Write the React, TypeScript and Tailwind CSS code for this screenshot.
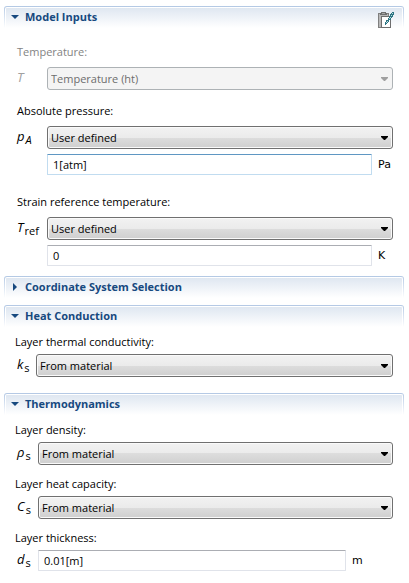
import React, { useState } from "react";
import clsx from "clsx";

interface SectionProps {
  title: string;
  defaultOpen?: boolean;
  action?: React.ReactNode;
  className?: string;
  children?: React.ReactNode;
}

interface SelectFieldProps {
  id: string;
  options: string[];
  disabled?: boolean;
}

interface TextFieldProps {
  id: string;
  value: string;
  label?: string;
  active?: boolean;
}

const ClipboardPenIcon = () => (
  <svg width="16" height="16" viewBox="0 0 16 16" shapeRendering="crispEdges">
    <path fill="#7f7f7f" d="M0 1h11v15H0z" />
    <path fill="#b9b9b9" d="M1 2h9v13H1z" />
    <path fill="#6e6e6e" d="M3 0h5v1h1v2H2V1h1z" />
    <path fill="#a5a5a5" d="M4 1h3v1H4z" />
    <path fill="#6e6e6e" d="M3 4h10v12H3z" />
    <path fill="#ffffff" d="M4 5h8v10H4z" />
    <path
      fill="#2b7482"
      d="M14 0h2v3h-1v2h-1v1h-1v2h-2v2h-1v1H9v1H8v1H7v-3h1V8h2V6h1V4h1V2h1V1h1z"
    />
    <path
      fill="#b5d8de"
      d="M14 1h1v1h-1zM13 3h1v1h-1zM12 5h1v1h-1zM11 6h1v1h-1zM9 9h1v1H9zM8 10h1v1H8z"
    />
  </svg>
);

const Section: React.FC<SectionProps> = ({
  title,
  defaultOpen = true,
  action,
  className,
  children,
}) => {
  const [open, setOpen] = useState(defaultOpen);

  return (
    <section>
      <div className="rounded-t-[3px] bg-linear-to-b from-[#b3c8e4] to-white px-px pt-px">
        <div className="flex h-[21px] items-center justify-between rounded-t-[2px] border-x border-t border-white bg-linear-to-b from-[#dfe7f1] to-white pr-2">
          <h2 className="pb-0.5">
            <button
              type="button"
              aria-expanded={open}
              onClick={() => setOpen(!open)}
              className="flex items-center gap-1.5 pl-[5px] text-[11px] leading-4 font-bold text-[#17497f]"
            >
              <svg width="8" height="8" viewBox="0 0 8 8">
                {open ? (
                  <path fill="currentColor" d="M0 2h8L4 6z" />
                ) : (
                  <path fill="currentColor" d="M2 0v8l4-4z" />
                )}
              </svg>
              {title}
            </button>
          </h2>
          {action}
        </div>
      </div>
      {open && children && (
        <div className={clsx("pr-[11px]", className)}>{children}</div>
      )}
    </section>
  );
};

const SelectField: React.FC<SelectFieldProps> = ({ id, options, disabled }) => (
  <div className="relative min-w-0 flex-1">
    <select
      id={id}
      disabled={disabled}
      className={clsx(
        "block h-[23px] w-full appearance-none rounded-[3px] border pr-5 pl-[3px] leading-4",
        disabled
          ? "border-[#adb2b5] bg-[#f4f4f4] text-[#6d6d6d] opacity-100"
          : "border-[#707070] bg-[linear-gradient(#f2f2f2,#ebebeb_50%,#dddddd_50%,#cfcfcf)] text-black shadow-[inset_0_0_0_1px_#fafafa]",
      )}
    >
      {options.map((item) => (
        <option key={item}>{item}</option>
      ))}
    </select>
    <svg
      width="7"
      height="4"
      viewBox="0 0 7 4"
      className={clsx(
        "pointer-events-none absolute top-[10px] right-[5px]",
        disabled ? "text-[#a0a0a0]" : "text-black",
      )}
    >
      <path fill="currentColor" d="M0 0h7v1L4 4H3L0 1z" />
    </svg>
  </div>
);

const TextField: React.FC<TextFieldProps> = ({ id, value, label, active }) => (
  <input
    id={id}
    type="text"
    defaultValue={value}
    aria-label={label}
    className={clsx(
      "h-[21px] min-w-0 flex-1 rounded-[1px] border bg-white pl-[5px] leading-4 outline-none",
      active
        ? "border-[#c1dcf0] border-t-[#5f97c3]"
        : "border-[#e0e3ea] border-t-[#abadb3]",
    )}
  />
);

const Unit: React.FC<{ children: string; className: string }> = ({
  children,
  className,
}) => (
  <span
    className={clsx(
      "ml-1.5 shrink-0 font-['DejaVu_Sans',sans-serif] text-[11px] leading-4",
      className,
    )}
  >
    {children}
  </span>
);

const Sym: React.FC<{
  name: string;
  sub?: string;
  italicSub?: boolean;
  className: string;
}> = ({ name, sub, italicSub, className }) => (
  <span
    className={clsx(
      "flex h-5 shrink-0 items-start gap-px text-[13px] leading-4",
      className,
    )}
  >
    <i>{name}</i>
    {sub && (
      <span
        className={clsx("pt-1 text-[11px] leading-4", italicSub && "italic")}
      >
        {sub}
      </span>
    )}
  </span>
);

const Label: React.FC<{
  htmlFor: string;
  className?: string;
  children: string;
}> = ({ htmlFor, className, children }) => (
  <label htmlFor={htmlFor} className={clsx("block leading-4", className)}>
    {children}
  </label>
);

const sourceOptions = ["From material", "User defined"];
const inputOptions = ["User defined", "Temperature (ht)"];

export default function App() {
  return (
    <main className="bg-white pt-1.5 pr-[5px] pb-3 pl-1 font-['Open_Sans',sans-serif] text-[11px] text-black">
      <Section
        title="Model Inputs"
        className="pt-4 pb-2.5 pl-[13px]"
        action={
          <button type="button" aria-label="Edit model inputs" className="pt-1">
            <ClipboardPenIcon />
          </button>
        }
      >
        <Label htmlFor="temperature" className="mb-[7px] text-[#838383]">
          Temperature:
        </Label>
        <div className="flex items-center">
          <Sym name="T" className="w-[30px] text-[#a0a0a0]" />
          <SelectField
            id="temperature"
            options={["Temperature (ht)", "User defined"]}
            disabled
          />
        </div>

        <Label htmlFor="pressure" className="mt-[13px] mb-[7px]">
          Absolute pressure:
        </Label>
        <div className="flex items-center">
          <Sym name="p" sub="A" italicSub className="w-[30px]" />
          <SelectField id="pressure" options={inputOptions} />
        </div>
        <div className="mt-[5px] flex items-center pl-[30px]">
          <TextField
            id="pressure-value"
            label="Absolute pressure value"
            value="1[atm]"
            active
          />
          <Unit className="w-[15px]">Pa</Unit>
        </div>

        <Label htmlFor="strain" className="mt-[19px] mb-[7px]">
          Strain reference temperature:
        </Label>
        <div className="flex items-center">
          <Sym name="T" sub="ref" className="w-[30px]" />
          <SelectField id="strain" options={inputOptions} />
        </div>
        <div className="mt-[5px] flex items-center pl-[30px]">
          <TextField
            id="strain-value"
            label="Strain reference temperature value"
            value="0"
          />
          <Unit className="w-[15px]">K</Unit>
        </div>
      </Section>

      <div className="mb-[7px]">
        <Section title="Coordinate System Selection" defaultOpen={false} />
      </div>

      <Section title="Heat Conduction" className="pt-[7px] pb-4 pl-[11px]">
        <Label htmlFor="conductivity" className="mb-1">
          Layer thermal conductivity:
        </Label>
        <div className="flex items-center">
          <Sym name="k" sub="s" className="w-[21px] pl-0.5" />
          <SelectField id="conductivity" options={sourceOptions} />
        </div>
      </Section>

      <Section title="Thermodynamics" className="pt-[7px] pl-[11px]">
        <Label htmlFor="density" className="mb-1">
          Layer density:
        </Label>
        <div className="flex items-center">
          <Sym name="ρ" sub="s" className="w-[23px] pl-0.5" />
          <SelectField id="density" options={sourceOptions} />
        </div>

        <Label htmlFor="capacity" className="mt-[11px] mb-1">
          Layer heat capacity:
        </Label>
        <div className="flex items-center">
          <Sym name="C" sub="s" className="w-[23px] pl-0.5" />
          <SelectField id="capacity" options={sourceOptions} />
        </div>

        <Label htmlFor="thickness" className="mt-[11px] mb-1">
          Layer thickness:
        </Label>
        <div className="flex items-center">
          <Sym name="d" sub="s" className="w-[23px] pl-0.5" />
          <TextField id="thickness" value="0.01[m]" />
          <Unit className="w-[41px]">m</Unit>
        </div>
      </Section>
    </main>
  );
}
